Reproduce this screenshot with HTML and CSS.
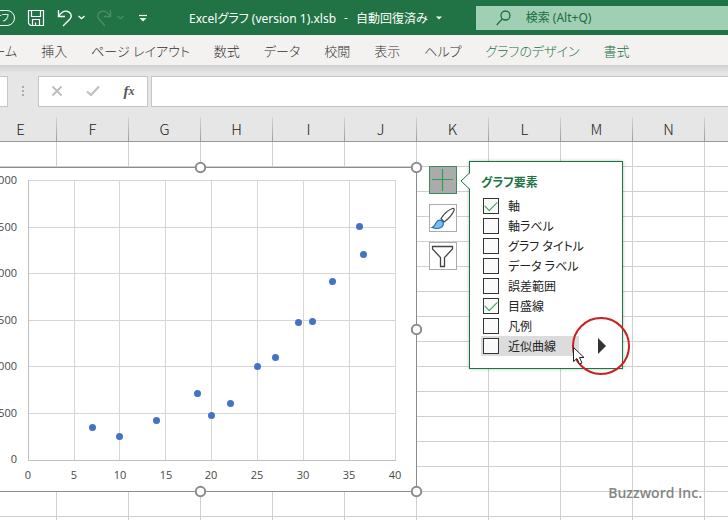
FILE: index.html
```
<!DOCTYPE html>
<html lang="ja">
<head>
    <meta charset="UTF-8">
    <meta name="viewport" content="width=device-width, initial-scale=1.0">
    <title>Excelグラフ (version 1).xlsb</title>
    <link rel="stylesheet" href="styles.css">
</head>
<body>
    <header class="titlebar">
        <button type="button" class="autosave">オフ</button>
        <button type="button" class="quick" aria-label="上書き保存">
            <svg width="18" height="18" viewBox="0 0 18 18" fill="none" stroke="#fff" stroke-width="1.2">
                <path d="M1.500 1.500H16.500V16.500H3.500L1.500 14.500ZM4.500 1.500V7.500H13.500V1.500M5.500 16.500V10.500H12.500V16.500M8.500 16V13.500"/>
            </svg>
        </button>
        <button type="button" class="quick undo" aria-label="元に戻す">
            <svg width="28" height="18" viewBox="0 0 28 18" fill="none" stroke="#fff" stroke-width="1.400">
                <path d="M1.500 1V7.500H8M1.500 7.500C4 3.500 7 1.700 10 2.200C14 3 15.500 7 13 10L6 17"/>
                <path d="M21.500 7L24.500 9.500L27.500 7"/>
            </svg>
        </button>
        <button type="button" class="quick redo" aria-label="やり直し">
            <svg width="28" height="18" viewBox="0 0 28 18" fill="none" stroke="#4a8d6b" stroke-width="1.400">
                <path d="M14.500 1V7.500H8M14.500 7.500C12 3.500 9 1.700 6 2.200C2 3 .5 7 3 10L9 17"/>
                <path d="M21.500 7L24.500 9.500L27.500 7"/>
            </svg>
        </button>
        <button type="button" class="quick more" aria-label="クイック アクセス ツール バーのカスタマイズ">
            <svg width="8" height="8" viewBox="0 0 8 8">
                <path d="M0 1.500H8" stroke="#fff" stroke-width="1.200"/>
                <path d="M.500 4H7.500L4 7.500Z" fill="#fff"/>
            </svg>
        </button>
        <button type="button" class="filename">
            <span>Excelグラフ (version 1).xlsb</span>
            <span>-</span>
            <span>自動回復済み</span>
            <svg width="6" height="4" viewBox="0 0 6 4"><path d="M0 .5H6L3 3.500Z" fill="#fff"/></svg>
        </button>
        <label class="search">
            <svg width="15" height="16" viewBox="0 0 15 16" fill="none" stroke="#1d6b40" stroke-width="1.300">
                <circle cx="9.500" cy="5.500" r="4.500"/>
                <path d="M6.300 8.900L.7 15"/>
            </svg>
            <input type="text" placeholder="検索 (Alt+Q)" aria-label="検索">
        </label>
    </header>

    <nav class="tabs">
        <a href="#">ホーム</a>
        <a href="#">挿入</a>
        <a href="#">ページ レイアウト</a>
        <a href="#">数式</a>
        <a href="#">データ</a>
        <a href="#">校閲</a>
        <a href="#">表示</a>
        <a href="#">ヘルプ</a>
        <a href="#" class="context">グラフのデザイン</a>
        <a href="#" class="context">書式</a>
    </nav>

    <div class="formula-bar">
        <div class="name-box"></div>
        <svg class="grip" width="3" height="11" viewBox="0 0 3 11" fill="#aaa">
            <rect width="2" height="2"/><rect y="4" width="2" height="2"/><rect y="8" width="2" height="2"/>
        </svg>
        <div class="formula-buttons">
            <button type="button" aria-label="キャンセル">
                <svg width="12" height="12" viewBox="0 0 12 12"><path d="M1.500 1.500L10.500 10.500M10.500 1.500L1.500 10.500" stroke="#bcbcbc" stroke-width="1.800"/></svg>
            </button>
            <button type="button" aria-label="入力">
                <svg width="14" height="12" viewBox="0 0 14 12"><path d="M1 6.500L5 10L13 1.500" fill="none" stroke="#c0c0c0" stroke-width="2.200"/></svg>
            </button>
            <button type="button" class="fx" aria-label="関数の挿入">f<sub>x</sub></button>
        </div>
        <input type="text" class="formula" aria-label="数式バー">
    </div>

    <main class="sheet">
        <div class="columns">
            <span>E</span><span>F</span><span>G</span><span>H</span><span>I</span><span>J</span>
            <span>K</span><span>L</span><span>M</span><span>N</span><span></span>
        </div>
        <div class="cells">
            <div class="chart">
                <svg width="433" height="325" viewBox="-16 167 433 325">
                    <g class="gridlines">
                        <path d="M28 180.500H396M28 227.500H396M28 273.500H396M28 320.500H396M28 366.500H396M28 413.500H396"/>
                        <path d="M74.500 180V460M119.500 180V460M165.500 180V460M211.500 180V460M257.500 180V460M303.500 180V460M349.500 180V460M395.500 180V460"/>
                        <path class="axis" d="M28.500 180V460.500H396"/>
                    </g>
                    <g class="y-labels">
                        <text x="17" y="184">3000</text>
                        <text x="17" y="231">2500</text>
                        <text x="17" y="277">2000</text>
                        <text x="17" y="324">1500</text>
                        <text x="17" y="370">1000</text>
                        <text x="17" y="417">500</text>
                        <text x="17" y="463">0</text>
                    </g>
                    <g class="x-labels">
                        <text x="28" y="479">0</text>
                        <text x="74" y="479">5</text>
                        <text x="120" y="479">10</text>
                        <text x="166" y="479">15</text>
                        <text x="211" y="479">20</text>
                        <text x="257" y="479">25</text>
                        <text x="303" y="479">30</text>
                        <text x="349" y="479">35</text>
                        <text x="395" y="479">40</text>
                    </g>
                    <g class="points">
                        <circle cx="92.500" cy="427.500" r="3.500"/>
                        <circle cx="119.500" cy="436.500" r="3.500"/>
                        <circle cx="156.500" cy="420.500" r="3.500"/>
                        <circle cx="197.500" cy="393.500" r="3.500"/>
                        <circle cx="211.500" cy="415.500" r="3.500"/>
                        <circle cx="230.500" cy="403.500" r="3.500"/>
                        <circle cx="257.500" cy="366.500" r="3.500"/>
                        <circle cx="275.500" cy="357.500" r="3.500"/>
                        <circle cx="298.500" cy="322.500" r="3.500"/>
                        <circle cx="312.500" cy="321.500" r="3.500"/>
                        <circle cx="332.500" cy="281.500" r="3.500"/>
                        <circle cx="363.500" cy="254.500" r="3.500"/>
                        <circle cx="359.500" cy="226.500" r="3.500"/>
                    </g>
                    <rect class="frame" x="-15.500" y="167.500" width="432" height="324"/>
                    <g class="handles">
                        <circle cx="200.500" cy="167.500" r="4.700"/>
                        <circle cx="416.500" cy="167.500" r="4.700"/>
                        <circle cx="416.500" cy="329.500" r="4.700"/>
                        <circle cx="200.500" cy="491.500" r="4.700"/>
                        <circle cx="416.500" cy="491.500" r="4.700"/>
                    </g>
                </svg>
            </div>

            <div class="chart-tools">
                <div class="tool-buttons">
                    <button type="button" class="active" aria-label="グラフ要素">
                        <svg width="26" height="26" viewBox="0 0 26 26"><path d="M12.500 2V24M2 12.500H23" stroke="#2f9e55" stroke-width="1.200"/></svg>
                    </button>
                    <button type="button" aria-label="グラフ スタイル">
                        <svg width="26" height="26" viewBox="0 0 26 26">
                            <path d="M11 13.500C14 9 18 5 22.500 3.500C24 3.200 24.500 4 24 5.500C22 10 18.500 14 14 17Z" fill="#fff" stroke="#444" stroke-width="1.200"/>
                            <path d="M2 22.500C5 21.500 5 19 6.500 17C8 14.800 10.500 14.500 12.200 16C14.300 18 13.500 21 11 22.500C8.500 23.800 5 23.700 2 22.500Z" fill="#7bbcf0" stroke="#1f6fb5" stroke-width="1.200"/>
                        </svg>
                    </button>
                    <button type="button" aria-label="グラフ フィルター">
                        <svg width="26" height="26" viewBox="0 0 26 26"><path d="M2.500 3.500H22.500V6L14.500 14.500V23.500H10.500V14.500L2.500 6Z" fill="#fff" stroke="#444" stroke-width="1.300"/></svg>
                    </button>
                </div>

                <form class="elements">
                    <svg class="pointer" width="11" height="18" viewBox="0 0 11 18">
                        <path d="M11 0L1 9L11 18Z" fill="#fff"/>
                        <path d="M10 .5L1 9L10 17.500" fill="none" stroke="#217346"/>
                    </svg>
                    <h2>グラフ要素</h2>
                    <label><input type="checkbox" checked>軸</label>
                    <label><input type="checkbox">軸ラベル</label>
                    <label><input type="checkbox">グラフ タイトル</label>
                    <label><input type="checkbox">データ ラベル</label>
                    <label><input type="checkbox">誤差範囲</label>
                    <label><input type="checkbox" checked>目盛線</label>
                    <label><input type="checkbox">凡例</label>
                    <div class="row">
                        <label class="hover"><input type="checkbox">近似曲線</label>
                        <button type="button" class="expand" aria-label="近似曲線のオプション">
                            <svg width="8" height="16" viewBox="0 0 8 16"><path d="M0 0V16L8 8Z" fill="#333"/></svg>
                        </button>
                        <svg class="marker" width="60" height="60" viewBox="0 0 60 60">
                            <circle cx="30" cy="30" r="28" fill="none" stroke="#c8201f" stroke-width="2"/>
                            <path d="M2.500 31.500V45.500L6 42.500L8.500 48L11 47L8.500 41.500H13Z" fill="#fff" stroke="#222"/>
                        </svg>
                    </div>
                </form>
            </div>
        </div>
        <p class="credit">Buzzword Inc.</p>
    </main>
</body>
</html>
```
FILE: styles.css
```
* {
    box-sizing: border-box;
}
body {
    font-family: "Noto Sans", "Noto Sans CJK JP", sans-serif;
    font-size: 12px;
    font-feature-settings: "palt";
    margin: 0;
    min-height: 100vh;
    display: flex;
    flex-direction: column;
    overflow: hidden;
    color: #222;
    background-color: #e6e6e6;
}
button, input {
    font: inherit;
    font-feature-settings: inherit;
    color: inherit;
    padding: 0;
    margin: 0;
    border: none;
    background: none;
}
button {
    display: flex;
    align-items: center;
    justify-content: center;
}
a {
    color: inherit;
    text-decoration: none;
}

/* title bar */
.titlebar {
    display: flex;
    align-items: center;
    height: 35px;
    background-color: #217346;
    color: #fff;
}
.autosave {
    flex: none;
    width: 40px;
    height: 16px;
    margin-left: -25px;
    padding-right: 5px;
    justify-content: flex-end;
    border: 1px solid #fff;
    border-radius: 8px;
    font-size: 9px;
}
.quick {
    flex: none;
    margin-left: 12px;
}
.redo {
    margin-left: 11px;
}
.more {
    margin-left: 15px;
}
.filename {
    flex: none;
    gap: 8px;
    margin-left: 42px;
    white-space: pre;
}
.search {
    flex: 1;
    display: flex;
    align-items: center;
    gap: 15px;
    height: 24px;
    margin-left: 34px;
    padding-left: 20px;
    background-color: #9fcfb4;
    color: #1d6b40;
}
.search input {
    flex: 1;
    min-width: 0;
    outline: none;
}
.search input::placeholder {
    color: #1d6b40;
    opacity: 1;
}

/* ribbon tabs */
.tabs {
    display: flex;
    align-items: center;
    gap: 24px;
    height: 30px;
    margin-left: -24px;
    padding-left: 4px;
    font-size: 13px;
    font-weight: 300;
    white-space: nowrap;
    color: #333;
    background-color: #f3f2f1;
}
.tabs .context {
    color: #217346;
}

/* formula bar */
.formula-bar {
    display: flex;
    align-items: center;
    height: 52px;
    background: linear-gradient(#d2d2d2, #e6e6e6 8px);
}
.name-box {
    width: 8px;
    height: 31px;
    border: 1px solid #c6c6c6;
    border-left: none;
    background-color: #fff;
}
.grip {
    margin: 0 13px 0 14px;
}
.formula-buttons {
    display: flex;
    width: 110px;
    height: 31px;
    border: 1px solid #c6c6c6;
    background-color: #fff;
}
.formula-buttons button {
    flex: 1;
}
.formula-buttons .fx {
    font: italic bold 15px "Liberation Serif", serif;
    color: #555;
}
.fx sub {
    font-size: 12px;
}
.formula {
    flex: 1;
    min-width: 0;
    height: 31px;
    margin-left: 3px;
    padding: 0 8px;
    border: 1px solid #c6c6c6;
    border-right: none;
    background-color: #fff;
}

/* worksheet */
.sheet {
    flex: 1;
    display: flex;
    flex-direction: column;
    position: relative;
    overflow: hidden;
}
.columns {
    display: flex;
    height: 25px;
    margin-left: -15px;
    border-bottom: 1px solid #999;
}
.columns span {
    flex: none;
    width: 72px;
    font: 300 15px/24px "Noto Sans CJK JP", sans-serif;
    text-align: center;
    border-right: 1px solid;
    border-image: linear-gradient(#dadada, #999) 1;
}
.cells {
    flex: 1;
    position: relative;
    margin-left: -15px;
    background-color: #fff;
    background-image:
        linear-gradient(to left, #d0d0d0 1px, transparent 1px),
        linear-gradient(to top, #d0d0d0 1px, transparent 1px);
    background-size: 72px 25px;
}

/* chart */
.chart {
    position: absolute;
    left: -1px;
    top: 25px;
    background-color: #fff;
}
.chart svg {
    display: block;
    overflow: visible;
}
.gridlines {
    fill: none;
    stroke: #d6d6d6;
}
.gridlines .axis {
    stroke: #bfbfbf;
}
.y-labels, .x-labels {
    font-family: "Open Sans", sans-serif;
    font-size: 11px;
    fill: #484848;
}
.y-labels {
    text-anchor: end;
}
.x-labels {
    text-anchor: middle;
}
.points {
    fill: #4472c4;
}
.frame {
    fill: none;
    stroke: #8c8c8c;
}
.handles {
    fill: #fff;
    stroke: #8c8c8c;
    stroke-width: 2;
}

/* chart buttons and the elements menu */
.chart-tools {
    position: absolute;
    left: 444px;
    top: 19px;
    display: flex;
    align-items: flex-start;
    gap: 12px;
}
.tool-buttons {
    display: flex;
    flex-direction: column;
    gap: 10px;
    padding-top: 5px;
}
.tool-buttons button {
    width: 28px;
    height: 28px;
    border: 1px solid #ababab;
    background-color: #fff;
}
.tool-buttons .active {
    border-color: #3c8a5e;
    background-color: #ababab;
}
.elements {
    position: relative;
    width: 154px;
    padding: 11px 11px 12px;
    border: 1px solid #217346;
    background-color: #fff;
    box-shadow: 0 0 3px rgba(33, 115, 70, 0.4);
}
.pointer {
    position: absolute;
    left: -10px;
    top: 10px;
}
.elements h2 {
    margin: 0 0 3px;
    font-size: 12px;
    line-height: 20px;
    color: #217346;
}
.elements label {
    display: flex;
    align-items: center;
    gap: 9px;
    height: 20px;
    padding-left: 2px;
    white-space: nowrap;
}
.elements .hover {
    width: 98px;
    background-color: #dcdcdc;
}
.elements input {
    appearance: none;
    display: flex;
    justify-content: center;
    width: 16px;
    height: 16px;
    border: 1px solid #333;
    background-color: #fafafa;
}
.elements input:checked::after {
    content: "";
    width: 11px;
    height: 6px;
    margin-top: 2px;
    border-left: 1px solid #2f9e55;
    border-bottom: 1px solid #2f9e55;
    transform: rotate(-45deg);
}
.row {
    position: relative;
    display: flex;
    align-items: center;
}
.expand {
    margin-left: 19px;
}
.marker {
    position: absolute;
    left: 90px;
    top: -20px;
    pointer-events: none;
}
.credit {
    position: absolute;
    right: 26px;
    bottom: 17px;
    margin: 0;
    font: 600 14px/20px "Open Sans", sans-serif;
    color: #858585;
}
```
